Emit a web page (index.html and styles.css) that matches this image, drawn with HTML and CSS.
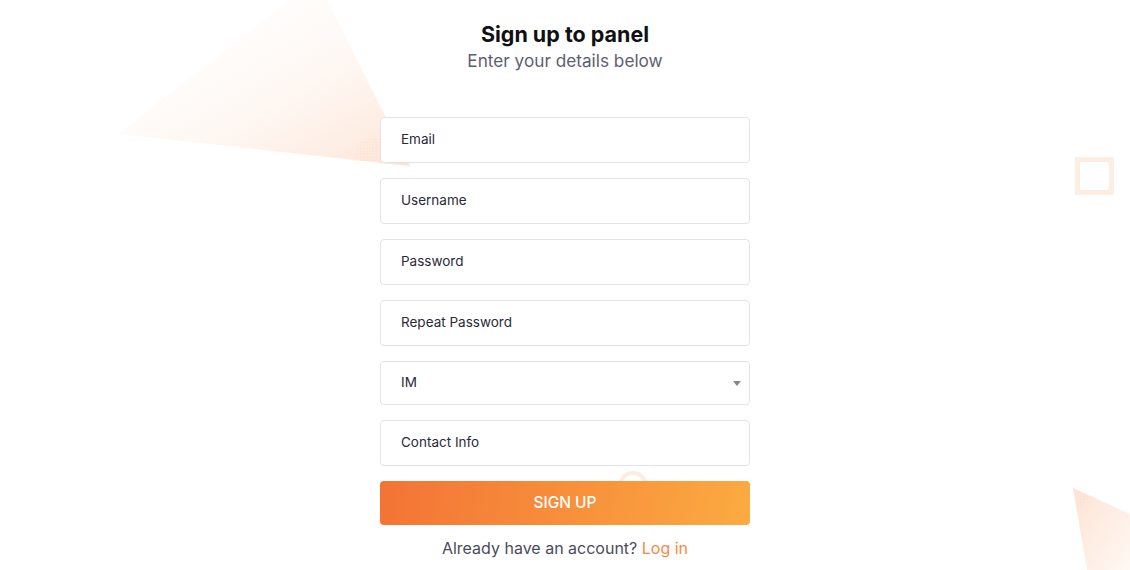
FILE: index.html
```html
<!DOCTYPE html>
<html lang="en">
<head>
<meta charset="utf-8">
<title>Sign up to panel</title>
<link rel="stylesheet" href="styles.css">
</head>
<body>
<svg class="bg" width="1130" height="570" viewBox="0 0 1130 570" aria-hidden="true">
  <defs>
    <linearGradient id="g1" x1="0" y1="0" x2="1" y2="1">
      <stop offset="0.15" stop-color="#fff6f0" stop-opacity="0"/>
      <stop offset="0.55" stop-color="#fef3ec" stop-opacity="0.6"/>
      <stop offset="1" stop-color="#fde4d5"/>
    </linearGradient>
    <linearGradient id="g2" x1="0" y1="0" x2="1" y2="1">
      <stop offset="0" stop-color="#fde3d4"/>
      <stop offset="1" stop-color="#fff8f3"/>
    </linearGradient>
    <pattern id="dots" width="3" height="3" patternUnits="userSpaceOnUse">
      <circle cx="1" cy="1" r="0.6" fill="#f8c9ad"/>
    </pattern>
  </defs>
  <polygon points="118,134 290,0 327,0 410,166" fill="url(#g1)"/>
  <polygon points="360,140 405,135 412,166 352,162" fill="url(#dots)" opacity="0.6"/>
  <rect x="1077.5" y="159.5" width="34" height="33" fill="none" stroke="#fdeee4" stroke-width="5"/>
  <polygon points="1073,488 1130,514 1130,570 1087,570" fill="url(#g2)"/>
  <polygon points="1074,490 1090,497 1080,510" fill="url(#dots)" opacity="0.7"/>
  <circle cx="633" cy="486" r="13" fill="none" stroke="#fdece1" stroke-width="4"/>
</svg>
<main class="page">
  <h1 class="title">Sign up to panel</h1>
  <p class="subtitle">Enter your details below</p>
  <form class="form">
    <input class="field" type="text" placeholder="Email">
    <input class="field" type="text" placeholder="Username">
    <input class="field" type="password" placeholder="Password">
    <input class="field" type="password" placeholder="Repeat Password">
    <div class="select">
      <span>IM</span>
      <svg class="caret" width="8" height="5" viewBox="0 0 8 5"><polygon points="0,0 8,0 4,5" fill="#888"/></svg>
    </div>
    <input class="field" type="text" placeholder="Contact Info">
    <button class="btn" type="button">SIGN UP</button>
  </form>
  <p class="foot">Already have an account? <a href="#" class="link">Log in</a></p>
</main>
</body>
</html>
```
FILE: styles.css
```css
* { box-sizing: border-box; }
html, body { margin: 0; padding: 0; }
body {
  width: 1130px;
  height: 570px;
  overflow: hidden;
  background: #fff;
  font-family: "Inter", "Lato", sans-serif;
  position: relative;
}
.bg {
  position: absolute;
  left: 0;
  top: 0;
  z-index: 0;
}
.page {
  position: relative;
  z-index: 1;
  display: flex;
  flex-direction: column;
  align-items: center;
  padding-top: 20px;
}
.title {
  margin: 0;
  font-size: 21.5px;
  font-weight: 700;
  color: #111;
  line-height: 28px;
}
.subtitle {
  margin: 0;
  font-size: 17.2px;
  color: #5e5e72;
  line-height: 26px;
}
.form {
  margin-top: 43px;
  width: 370px;
  display: flex;
  flex-direction: column;
  gap: 15px;
}
.field, .select {
  width: 370px;
  height: 46px;
  border: 1px solid #e4e4e4;
  border-radius: 4px;
  padding: 0 20px 3px;
  font-family: inherit;
  font-size: 13.5px;
  color: #222;
  background: #fff;
  outline: none;
}
.field::placeholder { color: #2a2a3a; }
.select {
  height: 44px;
  display: flex;
  align-items: center;
  justify-content: space-between;
  padding-right: 8px;
  color: #2a2a3a;
}
.caret { margin-top: 4px; }
.btn {
  height: 44px;
  border: none;
  border-radius: 4px;
  padding-bottom: 3px;
  background: linear-gradient(100deg, #f37335 0%, #fbab41 100%);
  color: #fff;
  font-family: inherit;
  font-size: 15.5px;
  font-weight: 500;
}
.foot {
  margin: 13px 0 0;
  font-size: 16px;
  color: #4b4b5c;
}
.link {
  color: #f58a46;
  text-decoration: none;
}
```
